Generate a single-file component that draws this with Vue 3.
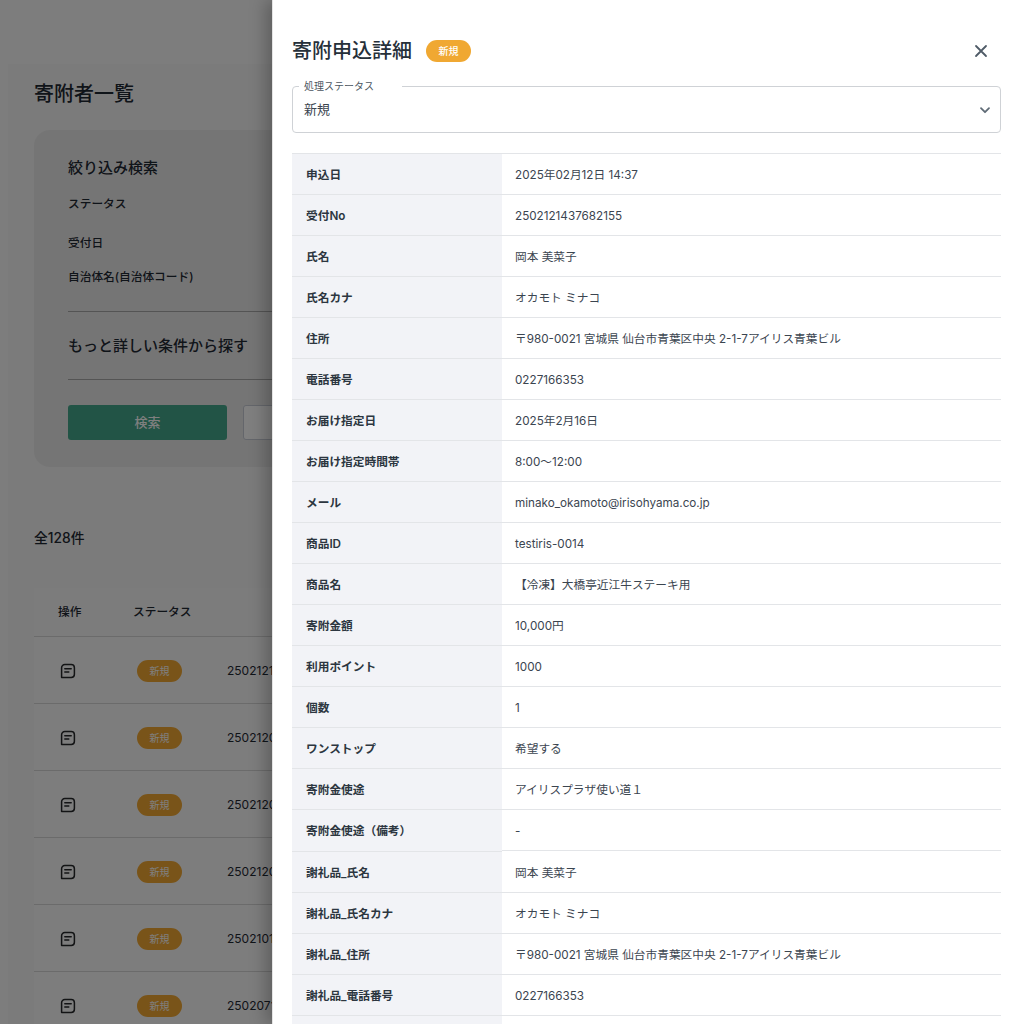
<script setup>
const statusRows = ['2502121', '2502120', '2502120', '2502120', '2502101', '2502071']

const details = [
  ['申込日', '2025年02月12日 14:37'],
  ['受付No', '2502121437682155'],
  ['氏名', '岡本 美菜子'],
  ['氏名カナ', 'オカモト ミナコ'],
  ['住所', '〒980-0021 宮城県 仙台市青葉区中央 2-1-7アイリス青葉ビル'],
  ['電話番号', '0227166353'],
  ['お届け指定日', '2025年2月16日'],
  ['お届け指定時間帯', '8:00〜12:00'],
  ['メール', 'minako_okamoto@irisohyama.co.jp'],
  ['商品ID', 'testiris-0014'],
  ['商品名', '【冷凍】大橋亭近江牛ステーキ用'],
  ['寄附金額', '10,000円'],
  ['利用ポイント', '1000'],
  ['個数', '1'],
  ['ワンストップ', '希望する'],
  ['寄附金使途', 'アイリスプラザ使い道１'],
  ['寄附金使途（備考）', '-'],
  ['謝礼品_氏名', '岡本 美菜子'],
  ['謝礼品_氏名カナ', 'オカモト ミナコ'],
  ['謝礼品_住所', '〒980-0021 宮城県 仙台市青葉区中央 2-1-7アイリス青葉ビル'],
  ['謝礼品_電話番号', '0227166353'],
  ['', '']
]
</script>

<template>
  <div class="page">
    <main class="content">
      <h1 class="page-title">寄附者一覧</h1>

      <section class="filter">
        <h2 class="filter-title">絞り込み検索</h2>
        <p class="field status-field">ステータス</p>
        <p class="field date-field">受付日</p>
        <p class="field city-field">自治体名(自治体コード)</p>
        <h2 class="more">もっと詳しい条件から探す</h2>
        <div class="actions">
          <button class="btn-search">検索</button>
          <button class="btn-clear"></button>
        </div>
      </section>

      <p class="count">全128件</p>

      <section class="list">
        <div class="list-head">
          <span class="col-op">操作</span>
          <span class="col-status">ステータス</span>
        </div>
        <div v-for="(no, i) in statusRows" :key="i" class="list-row">
          <span class="col-op">
            <svg width="16" height="16" viewBox="0 0 16 16" fill="none" stroke="#26282b" stroke-width="1.5" stroke-linecap="round" stroke-linejoin="round">
              <path d="M1.6 14.4V4.8a3.2 3.2 0 0 1 3.2-3.2h6.4a3.2 3.2 0 0 1 3.2 3.2v6.4a3.2 3.2 0 0 1-3.2 3.2z" />
              <path d="M4.8 5.8h6.4M4.8 9h4" />
            </svg>
          </span>
          <span class="col-status"><span class="pill">新規</span></span>
          <span class="col-no">{{ no }}</span>
        </div>
      </section>
    </main>

    <div class="overlay"></div>

    <aside class="drawer">
      <header class="drawer-head">
        <h2 class="drawer-title">寄附申込詳細</h2>
        <span class="badge">新規</span>
        <svg class="close" width="14" height="14" viewBox="0 0 14 14" fill="none" stroke="#4f5b67" stroke-width="1.8" stroke-linecap="round">
          <path d="M2 2l10 10M12 2L2 12" />
        </svg>
      </header>

      <div class="select">
        <span class="select-label">処理ステータス</span>
        <span class="select-value">新規</span>
        <svg width="12" height="12" viewBox="0 0 12 12" fill="none" stroke="#5f6b76" stroke-width="1.8" stroke-linecap="round" stroke-linejoin="round">
          <path d="M2 4.2l4 4 4-4" />
        </svg>
      </div>

      <dl class="details">
        <div v-for="(row, i) in details" :key="i" class="detail-row" :class="{ tall: i === 16 }">
          <dt>{{ row[0] }}</dt>
          <dd>{{ row[1] }}</dd>
        </div>
      </dl>
    </aside>
  </div>
</template>

<style>
html, body {
  margin: 0;
  height: 100%;
  overflow: hidden;
}
</style>

<style scoped>
.page {
  position: relative;
  width: 1013px;
  height: 1024px;
  overflow: hidden;
  background: #fafafa;
  font-family: Inter, "Noto Sans CJK JP", sans-serif;
  color: #1f2933;
}

.content {
  margin: 64px 0 0 8px;
  height: 960px;
  padding: 17px 0 0 26px;
  box-sizing: border-box;
  background: #f6f6f6;
}

.page-title {
  margin: 0;
  font-size: 20px;
  line-height: 26px;
  font-weight: 500;
}

.filter {
  width: 600px;
  height: 337px;
  margin-top: 23px;
  padding: 26px 34px;
  box-sizing: border-box;
  background: #ebebeb;
  border-radius: 16px;
}

.filter-title {
  margin: 0;
  font-size: 15px;
  line-height: 24px;
  font-weight: 500;
}

.field {
  margin: 0;
  font-size: 11.7px;
  line-height: 18px;
  font-weight: 500;
}

.status-field { margin-top: 15px; }
.date-field { margin-top: 21px; }
.city-field { margin-top: 16px; }

.more {
  margin: 25px 0 0;
  padding: 22px 0 21px;
  font-size: 15px;
  line-height: 24px;
  font-weight: 500;
  border-top: 1px solid #a8a8a8;
  border-bottom: 1px solid #a8a8a8;
}

.actions {
  display: flex;
  gap: 16px;
  margin-top: 25px;
}

.btn-search {
  width: 159px;
  height: 35px;
  padding: 0 0 2px;
  border: 0;
  border-radius: 3px;
  background: #45a98c;
  color: #fff;
  font: 500 13px Inter, "Noto Sans CJK JP", sans-serif;
}

.btn-clear {
  width: 159px;
  height: 35px;
  border: 1px solid #c9ccd6;
  border-radius: 3px;
  background: #fff;
}

.count {
  margin: 60px 0 0;
  font-size: 13.8px;
  line-height: 22px;
  font-weight: 500;
}

.list {
  width: 800px;
  margin-top: 39px;
  background: #fbfbfb;
}

.list-head,
.list-row {
  display: flex;
  align-items: center;
  border-bottom: 1px solid #d6d6d6;
  font-size: 11.7px;
}

.list-head {
  height: 49px;
  padding-bottom: 3px;
  box-sizing: border-box;
  background: #f9f9f9;
  font-weight: 500;
}

.list-row {
  height: 67px;
  padding-top: 1px;
  box-sizing: border-box;
}

.col-op {
  display: flex;
  width: 99px;
  padding-left: 24px;
  box-sizing: border-box;
}

.list-row .col-op {
  padding-left: 26px;
}

.col-status {
  display: flex;
  width: 94px;
}

.list-row .col-status {
  padding-left: 4px;
  box-sizing: border-box;
}

.pill {
  display: flex;
  align-items: center;
  justify-content: center;
  width: 45px;
  height: 22px;
  padding-bottom: 1px;
  box-sizing: border-box;
  border-radius: 11px;
  background: #f2a833;
  color: #fff;
  font-size: 10px;
}

.col-no {
  font-size: 12px;
}

.overlay {
  position: absolute;
  inset: 0;
  background: rgba(0, 0, 0, 0.5);
}

.drawer {
  position: absolute;
  top: 0;
  left: 272px;
  width: 741px;
  height: 1024px;
  padding: 0 12px 0 19px;
  box-sizing: border-box;
  overflow: hidden;
  background: #fff;
  border-left: 1px solid #e4e4e4;
  box-shadow: -6px 0 16px rgba(0, 0, 0, 0.25);
}

.drawer-head {
  display: flex;
  align-items: center;
  height: 86px;
  padding-top: 16px;
  box-sizing: border-box;
}

.drawer-title {
  margin: 0;
  font-size: 20px;
  line-height: 28px;
  font-weight: 500;
  color: #26303a;
}

.badge {
  display: flex;
  align-items: center;
  justify-content: center;
  width: 45px;
  height: 22px;
  padding-bottom: 1px;
  box-sizing: border-box;
  margin-left: 14px;
  border-radius: 11px;
  background: #f0a832;
  color: #fff;
  font-size: 10px;
  font-weight: 500;
}

.close {
  margin-left: auto;
  margin-right: 13px;
}

.select {
  position: relative;
  display: flex;
  align-items: center;
  justify-content: space-between;
  height: 47px;
  padding: 0 9px 0 11px;
  box-sizing: border-box;
  border: 1px solid #cfd2d6;
  border-radius: 4px;
  font-size: 13px;
  color: #3b4550;
}

.select-value {
  margin-bottom: 3px;
}

.select-label {
  position: absolute;
  top: -8px;
  left: 6px;
  padding: 0 28px 0 5px;
  background: #fff;
  font-size: 10px;
  line-height: 14px;
  color: #4b5560;
}

.details {
  margin: 20px 0 0;
  border-top: 1px solid #e3e5e8;
}

.detail-row {
  display: flex;
  align-items: flex-start;
  font-size: 11.7px;
}

dt,
dd {
  display: flex;
  align-items: center;
  height: 41px;
  padding-top: 1px;
  box-sizing: border-box;
  line-height: 16px;
  border-bottom: 1px solid #e3e5e8;
}

dt {
  width: 210px;
  padding-left: 14px;
  background: #f2f3f7;
  font-weight: 600;
  color: #2c3640;
}

dd {
  flex: 1;
  margin: 0;
  padding-left: 13px;
  color: #3b4550;
}

/* 備考 row: label cell is 1px taller than the value cell */
.tall dt {
  height: 42px;
}
.tall {
  height: 42px;
}
</style>
